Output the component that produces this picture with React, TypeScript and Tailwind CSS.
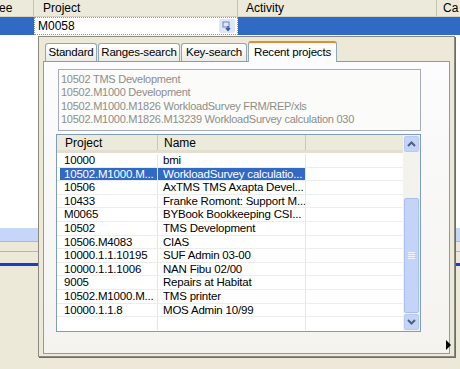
import React from "react";

const rows: [string, string][] = [
  ["10000", "bmi"],
  ["10502.M1000.M...", "WorkloadSurvey calculatio..."],
  ["10506", "AxTMS TMS Axapta Devel..."],
  ["10433", "Franke Romont: Support M..."],
  ["M0065", "BYBook Bookkeeping CSI..."],
  ["10502", "TMS Development"],
  ["10506.M4083", "CIAS"],
  ["10000.1.1.10195", "SUF Admin 03-00"],
  ["10000.1.1.1006", "NAN Fibu 02/00"],
  ["9005", "Repairs at Habitat"],
  ["10502.M1000.M...", "TMS printer"],
  ["10000.1.1.8", "MOS Admin 10/99"],
];

const recent = [
  "10502 TMS Development",
  "10502.M1000 Development",
  "10502.M1000.M1826 WorkloadSurvey FRM/REP/xls",
  "10502.M1000.M1826.M13239 WorkloadSurvey calculation 030",
];

const tabs: [string, string][] = [
  ["Standard", "w-[52px]"],
  ["Ranges-search", "w-[82px]"],
  ["Key-search", "w-[66px]"],
];

const Arrow = ({ up }: { up?: boolean }) => (
  <svg width="9" height="6" viewBox="0 0 9 6">
    <path
      d={up ? "M1 5 L4.5 1.5 L8 5" : "M1 1 L4.5 4.5 L8 1"}
      fill="none"
      stroke="#4d6185"
      strokeWidth="2"
    />
  </svg>
);

export default function App() {
  return (
    <div
      className="relative w-[460px] h-[369px] overflow-hidden bg-[#ece9d8] text-[11px] text-black"
      style={{ fontFamily: "'Liberation Sans', Arial, sans-serif" }}
    >
      {/* background grid */}
      <div className="flex h-[17px] border-b border-[#d6d2c2] bg-[#ebeadb] text-[12px]">
        <div className="w-[34px] overflow-hidden border-r border-[#c7c5b2] leading-[17px]">
          <span className="-ml-[1px]">ee</span>
        </div>
        <div className="w-[204px] border-r border-[#c7c5b2] pl-[9px] leading-[17px]">Project</div>
        <div className="w-[199px] border-r border-[#c7c5b2] pl-[8px] leading-[17px]">Activity</div>
        <div className="flex-1 pl-[6px] leading-[17px]">Ca</div>
      </div>
      <div className="flex h-[18px] bg-[#316ac5]">
        <div className="w-[34px]" />
        <div className="flex w-[204px] items-center justify-between border border-dotted border-[#7f9db9] bg-white pl-[3px] pr-[2px] text-[12px]">
          <span>M0058</span>
          <div className="flex h-[14px] w-[16px] items-center justify-center rounded-[2px] bg-[#dfe6f5]">
            <svg width="11" height="11" viewBox="0 0 11 11">
              <rect x="1" y="1" width="6" height="5" fill="none" stroke="#6b86b8" />
              <path d="M6 5 L6 9 M4 7 L6 9.5 L8 7" fill="none" stroke="#2f5aa8" strokeWidth="1.4" />
            </svg>
          </div>
        </div>
        <div className="flex-1" />
      </div>
      <div className="h-[193px] bg-white" />
      <div className="h-[14px] border-b border-[#a8b8d8] bg-[#c6d6f8]" />
      <div className="h-[10px] border-b border-[#b8b6a6] bg-[#ece9d8]" />
      <div className="h-[11px]" />
      <div className="h-[3px] bg-[#1a3cc8]" />

      {/* popup */}
      <div className="absolute left-[38px] top-[36px] flex h-[321px] w-[417px] flex-col border border-[#8c8a80] bg-[#ece9d8] px-[4px] pb-[2px] pt-[3px] shadow-[1px_1px_0_#6e6c64]">
        <div className="flex h-[21px] items-end pl-[2px]">
          {tabs.map(([t, w]) => (
            <div
              key={t}
              className={`${w} mr-[1px] h-[18px] whitespace-nowrap rounded-t-[3px] border border-b-0 border-[#91a7b4] bg-gradient-to-b from-white to-[#ecebe5] text-center text-[11.5px] leading-[17px] tracking-[-0.2px]`}
            >
              {t}
            </div>
          ))}
          <div className="relative -mb-[1px] h-[21px] w-[89px] whitespace-nowrap rounded-t-[3px] border border-b-0 border-t-[2px] border-[#91a7b4] border-t-[#e68b2c] bg-[#fcfcfe] text-center text-[11.5px] leading-[18px] tracking-[-0.2px]">
            Recent projects
          </div>
        </div>
        <div className="flex flex-1 flex-col border border-[#919b9c] bg-gradient-to-b from-[#fcfcfe] to-[#f4f3ee] pl-[12px] pr-[28px] pt-[7px]">
          <div className="ml-[2px] h-[62px] whitespace-nowrap border border-[#a5acb5] bg-[#fbfbf9] pl-[2px] pt-[3px] text-[11px] leading-[13.3px] tracking-[-0.25px] text-[#8e8e8a]">
            {recent.map((r) => (
              <div key={r}>{r}</div>
            ))}
          </div>
          <div className="mt-[3px] flex h-[198px] border border-[#7f9db9] bg-white">
            <div className="flex flex-1 flex-col">
              <div className="flex h-[18px] border-b-[3px] border-[#e2dfd0] bg-[#ebeadb] text-[12px]">
                <div className="w-[101px] border-r border-[#cbc7b8] pl-[8px] leading-[16px]">Project</div>
                <div className="w-[148px] border-r border-[#cbc7b8] pl-[6px] leading-[16px]">Name</div>
                <div className="flex-1" />
              </div>
              <div className="flex-1 pt-[1px] text-[11.5px]">
                {rows.map(([p, n], i) => {
                  const sel = i === 1;
                  return (
                    <div key={i} className="flex h-[13.6px] whitespace-nowrap border-b border-[#ededed] leading-[13px]">
                      <div className={`ml-[3px] w-[98px] overflow-hidden border-r border-[#e6e6e6] pl-[4px] tracking-[-0.2px] ${sel ? "bg-[#316ac5] text-white" : ""}`}>
                        {p}
                      </div>
                      <div className={`w-[148px] overflow-hidden border-r border-[#e6e6e6] pl-[5px] tracking-[-0.2px] ${sel ? "bg-[#316ac5] text-white" : ""}`}>
                        {n}
                      </div>
                      <div className="flex-1" />
                    </div>
                  );
                })}
                <div className="flex h-[13px]">
                  <div className="ml-[3px] w-[98px] border-r border-[#e6e6e6]" />
                  <div className="w-[148px] border-r border-[#e6e6e6]" />
                </div>
              </div>
            </div>
            <div className="flex w-[17px] flex-col bg-[#f3f2ec] p-[1px]">
              <div className="flex h-[16px] items-center justify-center rounded-[2px] border border-[#b7c9f0] bg-[#c4d4f7]">
                <Arrow up />
              </div>
              <div className="h-[46px]" />
              <div className="flex flex-1 items-center justify-center rounded-[2px] border border-[#a8bff0] bg-[#c4d4f8]">
                <div className="flex flex-col gap-[1px]">
                  <div className="h-px w-[7px] bg-[#eef3fe]" />
                  <div className="h-px w-[7px] bg-[#eef3fe]" />
                  <div className="h-px w-[7px] bg-[#eef3fe]" />
                  <div className="h-px w-[7px] bg-[#eef3fe]" />
                </div>
              </div>
              <div className="mt-[1px] flex h-[16px] items-center justify-center rounded-[2px] border border-[#b7c9f0] bg-[#c4d4f7]">
                <Arrow />
              </div>
            </div>
          </div>
        </div>
        <div className="absolute bottom-[6px] right-[3px] h-0 w-0 border-y-[5px] border-l-[5px] border-y-transparent border-l-black" />
      </div>
    </div>
  );
}
